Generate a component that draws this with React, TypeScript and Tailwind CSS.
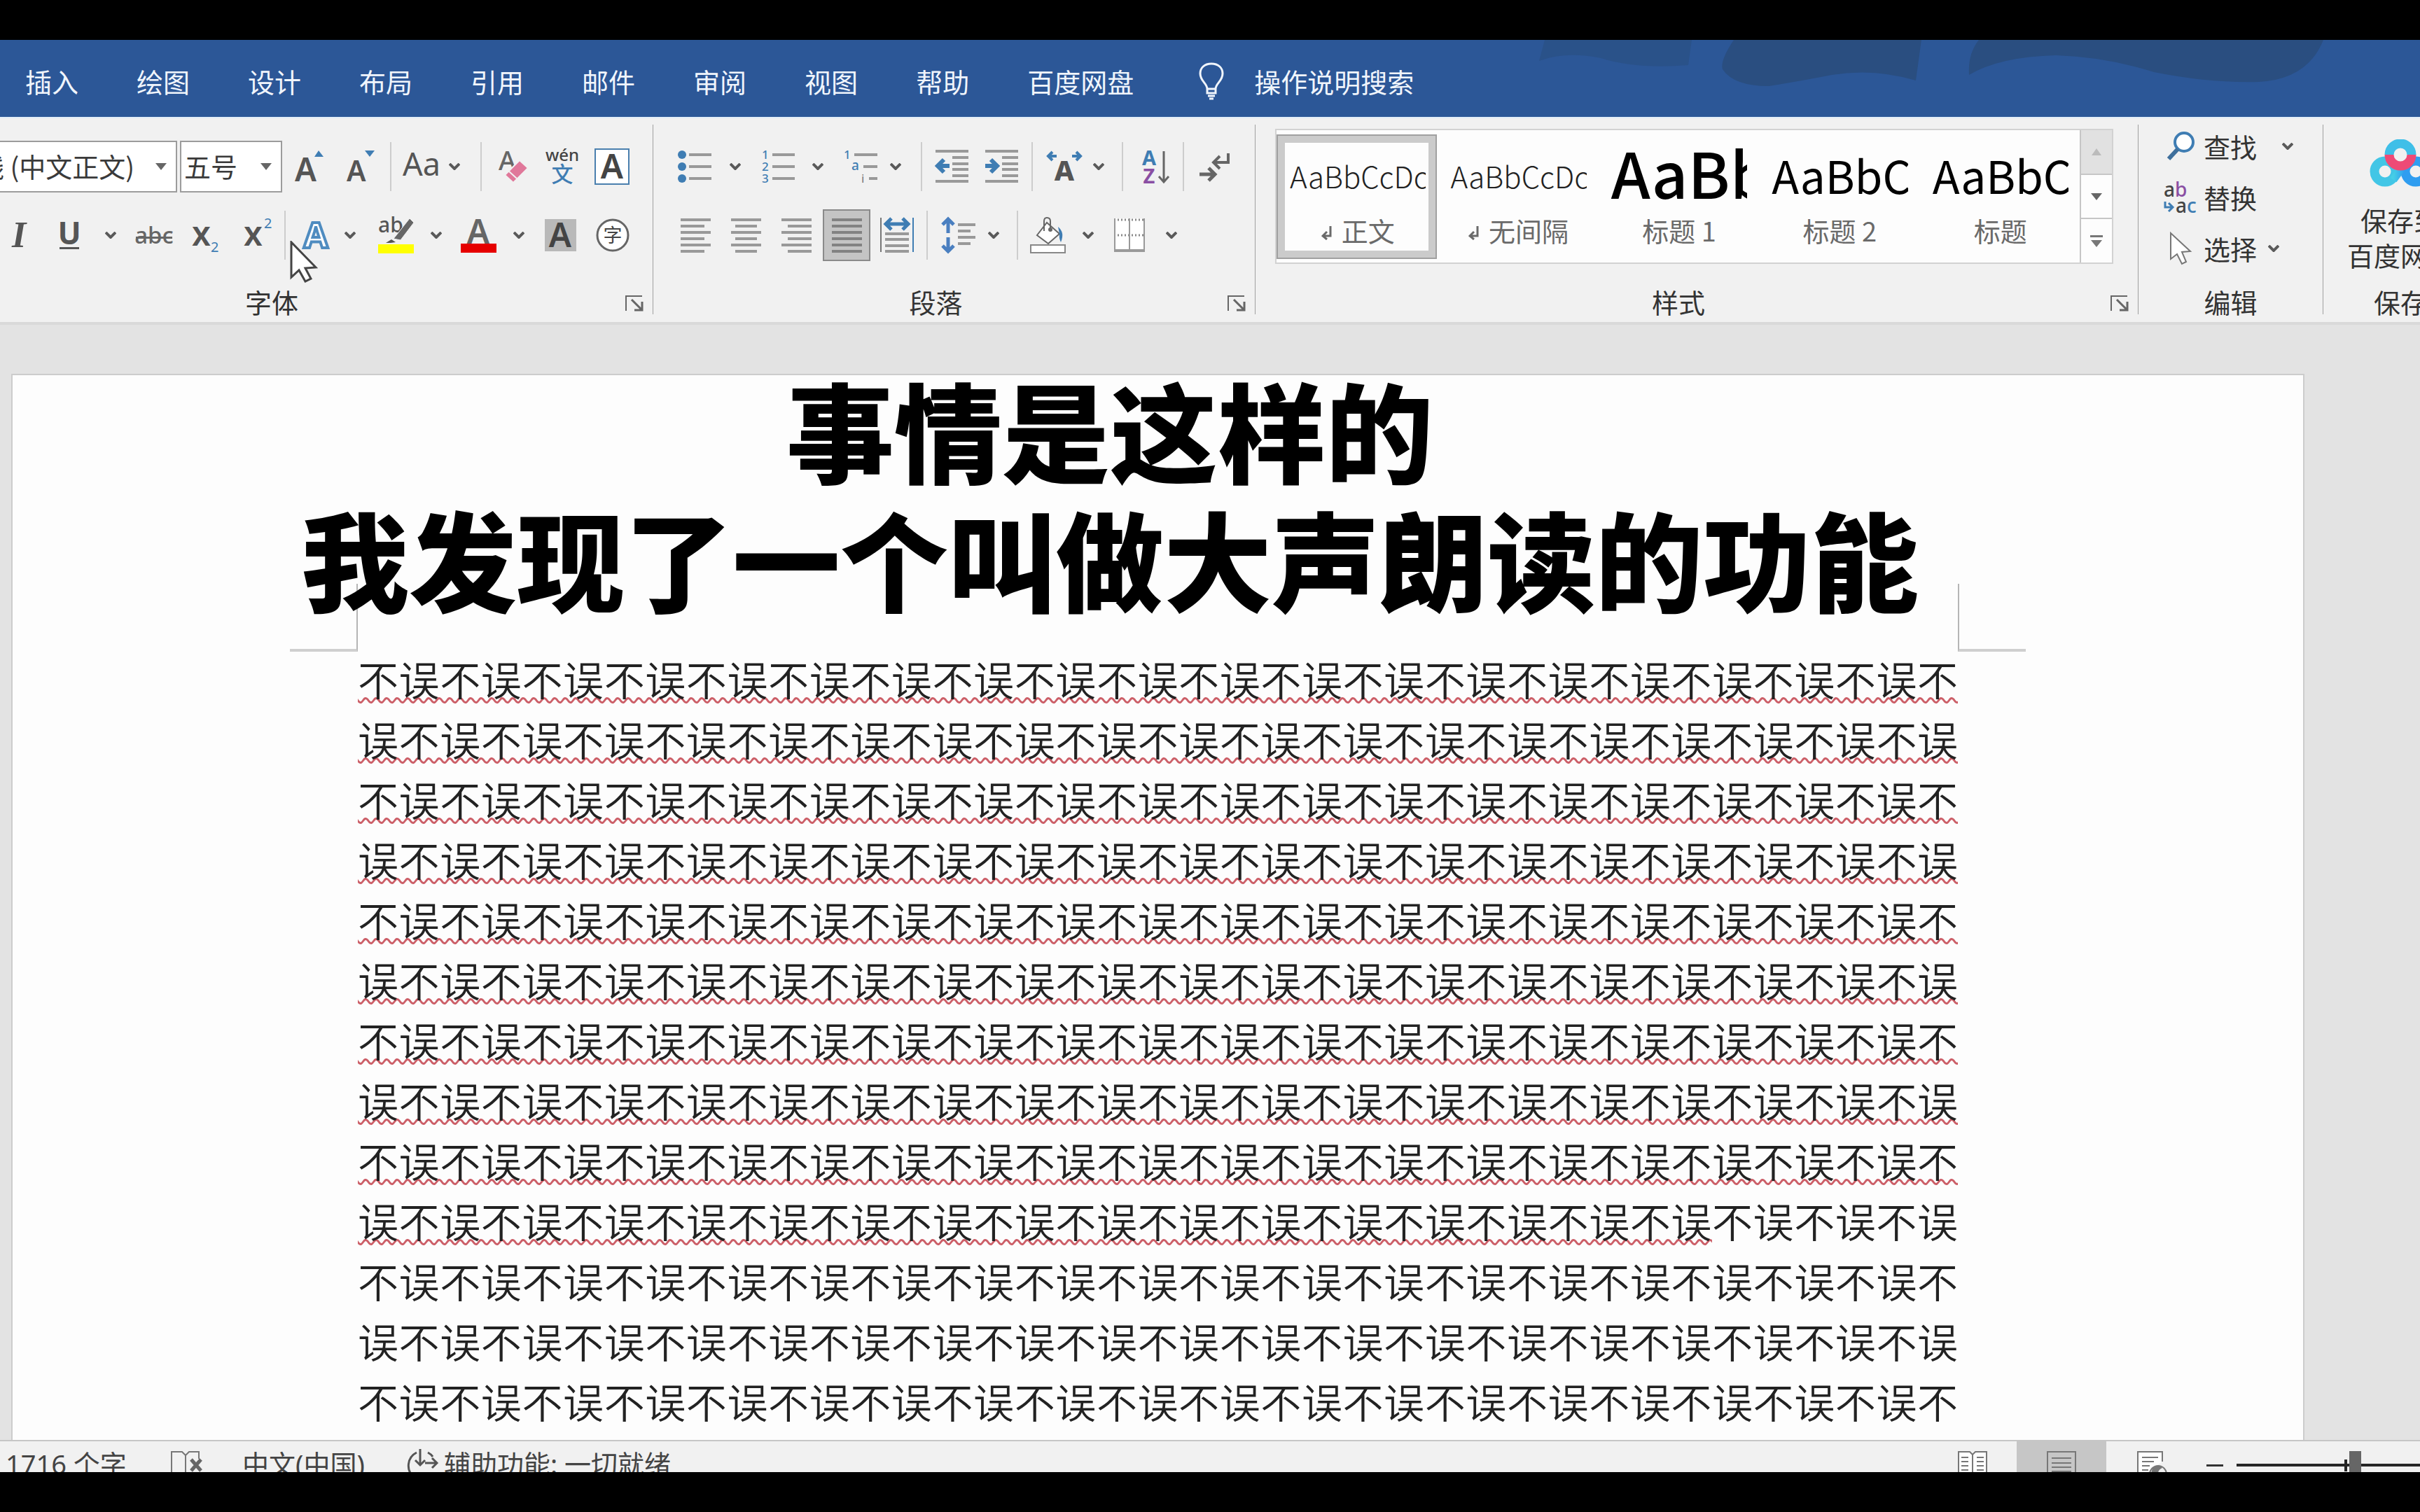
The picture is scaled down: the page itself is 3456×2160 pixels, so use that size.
import React from "react";

const TABS = ["插入", "绘图", "设计", "布局", "引用", "邮件", "审阅", "视图", "帮助", "百度网盘"];

const MARKED_PAIRS = 192;
const MARKED = "不误".repeat(MARKED_PAIRS);
const UNMARKED = "不误".repeat(61) + "不";

function Chevron() {
  return (
    <svg width="16" height="10" viewBox="0 0 16 10" fill="none" stroke="#5a5a5a" strokeWidth="4">
      <path d="M1 1 L8 8 L15 1" />
    </svg>
  );
}

function Rule({ className }: { className: string }) {
  return (
    <div className={`flex h-[70px] shrink-0 justify-center ${className}`}>
      <div className="h-full w-[2px] bg-[#cdcdcd]" />
    </div>
  );
}

function Tool({
  label,
  className,
  menu,
  children,
}: {
  label: string;
  className: string;
  menu?: string;
  children: React.ReactNode;
}) {
  return (
    <button type="button" aria-label={label} className={`flex h-[74px] shrink-0 items-center justify-center ${menu ?? ""} ${className}`}>
      {children}
      {menu && <Chevron />}
    </button>
  );
}

function Icon({ w, h = 52, children }: { w: number; h?: number; children: React.ReactNode }) {
  return (
    <svg width={w} height={h} viewBox={`0 0 ${w} ${h}`} fill="none" className="shrink-0 overflow-visible font-['Noto_Sans','Noto_Sans_CJK_SC',sans-serif]">
      {children}
    </svg>
  );
}

function Lines({ rows }: { rows: [number, number][] }) {
  return (
    <Icon w={43} h={48}>
      {rows.map(([x, w], i) => (
        <rect key={i} x={x} y={i * 9} width={w} height="4" fill="#999" />
      ))}
    </Icon>
  );
}

function GroupLabel({ text, launcher }: { text: string; launcher?: boolean }) {
  return (
    <div className="mt-auto mb-[10px] flex items-center">
      <div className="flex-1 text-center text-[38px] leading-[38px] text-[#333]">{text}</div>
      {launcher && (
        <button type="button" aria-label={`${text}设置`} className="flex w-[52px] justify-center pt-[4px]">
          <svg width="26" height="24" viewBox="0 0 26 24" fill="none" stroke="#666" strokeWidth="2">
            <path d="M1 23 V2 H24" />
            <path d="M9 7 L23 21 M24 10 V22 H13" strokeWidth="3" />
          </svg>
        </button>
      )}
    </div>
  );
}

function GroupRule() {
  return <div className="mt-[9px] mb-[11px] w-[1px] shrink-0 bg-[#a0a0a0]" />;
}

function ComboBox({ label, value, className }: { label: string; value: string; className: string }) {
  return (
    <div className={`flex h-[74px] shrink-0 items-center border-2 border-[#9c9c9c] bg-white ${className}`}>
      <input aria-label={label} defaultValue={value} className="h-full w-0 flex-1 bg-transparent pb-[4px] pl-[4px] text-[38px] text-[#3a3a3a] outline-none" />
      <button type="button" aria-label={`${label}列表`} className="flex h-full w-[42px] items-center justify-center">
        <svg width="16" height="10" viewBox="0 0 16 10" fill="#666">
          <path d="M0 0 H16 L8 10 Z" />
        </svg>
      </button>
    </div>
  );
}

function FontGroup() {
  return (
    <section aria-label="字体" className="-ml-[104px] flex w-[1036px] shrink-0 flex-col pt-[32px]">
      <div className="flex items-center pl-[24px]">
        <ComboBox label="字体名称" value="等线 (中文正文)" className="w-[333px] pl-[4px]" />
        <ComboBox label="字号" value="五号" className="ml-[4px] w-[146px]" />
        <Tool label="增大字号" className="ml-[2px] w-[73px]">
          <Icon w={42} h={46}>
            <text x="0" y="44" fontSize="46" fontWeight="600" fill="#555">A</text>
            <path d="M28 9 L34 0 L41 9 Z" fill="#3f7db3" />
          </Icon>
        </Tool>
        <Tool label="减小字号" className="w-[73px]">
          <Icon w={40} h={46}>
            <text x="0" y="44" fontSize="41" fontWeight="600" fill="#555">A</text>
            <path d="M26 0 L33 9 L40 0 Z" fill="#3f7db3" />
          </Icon>
        </Tool>
        <Rule className="w-[14px]" />
        <Tool label="更改大小写" className="w-[104px]" menu="gap-[14px]">
          <Icon w={50} h={46}>
            <text x="-2" y="36" fontSize="45" fill="#555">Aa</text>
          </Icon>
        </Tool>
        <Rule className="ml-[11px] w-[14px]" />
        <Tool label="清除所有格式" className="w-[79px]">
          <Icon w={42} h={50}>
            <text x="-1" y="30" fontSize="38" fontWeight="500" fill="#666">A</text>
            <path d="M29 16 L41 27 L20 48 L8 37 Z" fill="#e0789a" stroke="#f1f1f1" strokeWidth="2" />
            <path d="M13 31 L25 42" stroke="#f1f1f1" strokeWidth="2" />
          </Icon>
        </Tool>
        <Tool label="拼音指南" className="w-[59px]">
          <Icon w={44} h={52}>
            <text x="22" y="18" fontSize="24" fontWeight="500" textAnchor="middle" fill="#444">wén</text>
            <text x="22" y="48" fontSize="31" fontWeight="500" textAnchor="middle" fill="#3f7db3">文</text>
          </Icon>
        </Tool>
        <Tool label="字符边框" className="w-[84px]">
          <Icon w={50} h={52}>
            <rect x="1" y="1" width="48" height="50" fill="#fff" stroke="#4a7fae" strokeWidth="2" />
            <text x="25" y="43" fontSize="48" fontWeight="600" textAnchor="middle" fill="#444">A</text>
          </Icon>
        </Tool>
      </div>
      <div className="mt-[24px] flex items-center pl-[96px]">
        <Tool label="倾斜" className="w-[70px]">
          <span className="font-['Liberation_Serif',serif] text-[52px] leading-[52px] font-bold text-[#555] italic">I</span>
        </Tool>
        <Tool label="下划线" className="w-[126px]" menu="gap-[36px]">
          <Icon w={30} h={42}>
            <text x="15" y="34" fontSize="44" fontWeight="700" textAnchor="middle" fill="#555">U</text>
            <rect x="1" y="38" width="28" height="3" fill="#555" />
          </Icon>
        </Tool>
        <Tool label="删除线" className="w-[63px]">
          <Icon w={52} h={36}>
            <text x="26" y="30" fontSize="33" fontWeight="500" textAnchor="middle" fill="#666">abc</text>
            <rect x="0" y="20" width="52" height="3" fill="#666" />
          </Icon>
        </Tool>
        <Tool label="下标" className="w-[87px]">
          <Icon w={40} h={52}>
            <text x="-1" y="41" fontSize="48" fontWeight="600" fill="#555">x</text>
            <text x="26" y="50" fontSize="20" fill="#3f7db3">2</text>
          </Icon>
        </Tool>
        <Tool label="上标" className="w-[62px]">
          <Icon w={40} h={52}>
            <text x="-1" y="41" fontSize="48" fontWeight="600" fill="#555">x</text>
            <text x="28" y="16" fontSize="20" fill="#3f7db3">2</text>
          </Icon>
        </Tool>
        <Rule className="w-[14px]" />
        <Tool label="文本效果和版式" className="w-[111px]" menu="gap-[22px]">
          <Icon w={38} h={42}>
            <text x="19" y="39" fontSize="50" fontWeight="700" textAnchor="middle" fill="#fff" stroke="#4f8cc0" strokeWidth="4">
              A
            </text>
          </Icon>
        </Tool>
        <Tool label="文本突出显示颜色" className="w-[120px]" menu="gap-[24px]">
          <Icon w={51} h={52}>
            <text x="0" y="22" fontSize="30" fontWeight="500" fill="#555">ab</text>
            <path d="M45 2 L51 8 L32 33 L22 31 Z" fill="#666" stroke="#f1f1f1" strokeWidth="1" />
            <path d="M19 32 L25 36 L18 37 L11 37 Z" fill="#555" />
            <rect x="0" y="39" width="51" height="13" fill="#ffff00" />
          </Icon>
        </Tool>
        <Tool label="字体颜色" className="w-[116px]" menu="gap-[24px]">
          <Icon w={51} h={52}>
            <text x="25" y="38" fontSize="48" fontWeight="600" textAnchor="middle" fill="#666">A</text>
            <rect x="0" y="38" width="51" height="13" fill="#e60000" />
          </Icon>
        </Tool>
        <Tool label="字符底纹" className="w-[79px]">
          <Icon w={45} h={46}>
            <rect width="45" height="46" fill="#b9b9b9" />
            <text x="22" y="40" fontSize="48" fontWeight="600" textAnchor="middle" fill="#444">A</text>
          </Icon>
        </Tool>
        <Tool label="带圈字符" className="w-[69px]">
          <Icon w={48} h={50}>
            <circle cx="24" cy="25" r="22" fill="#fff" stroke="#666" strokeWidth="3" />
            <text x="24" y="35" fontSize="27" textAnchor="middle" fill="#444">字</text>
          </Icon>
        </Tool>
      </div>
      <GroupLabel text="字体" launcher />
    </section>
  );
}

function IndentIcon({ arrow }: { arrow: string }) {
  return (
    <Icon w={47} h={50}>
      <rect y="1" width="47" height="4" fill="#999" />
      <rect x="24" y="10" width="23" height="4" fill="#999" />
      <rect x="24" y="19" width="23" height="4" fill="#999" />
      <rect x="24" y="27" width="23" height="4" fill="#999" />
      <rect x="24" y="36" width="23" height="4" fill="#999" />
      <rect y="44" width="47" height="4" fill="#999" />
      <path d={arrow} stroke="#3f7db3" strokeWidth="6" />
    </Icon>
  );
}

function ParagraphGroup() {
  return (
    <section aria-label="段落" className="flex w-[859px] shrink-0 flex-col pt-[32px]">
      <div className="flex items-center pl-[20px]">
        <Tool label="项目符号" className="w-[120px]" menu="gap-[26px]">
          <Icon w={47} h={48}>
            {[7, 24, 41].map((y) => (
              <React.Fragment key={y}>
                <circle cx="5" cy={y} r="6" fill="#3f7db3" />
                <rect x="15" y={y - 2} width="32" height="4" fill="#999" />
              </React.Fragment>
            ))}
          </Icon>
        </Tool>
        <Tool label="编号" className="w-[117px]" menu="gap-[25px]">
          <Icon w={47} h={48}>
            {[7, 24, 41].map((y, i) => (
              <React.Fragment key={y}>
                <text x="0" y={y + 6} fontSize="17" fontWeight="500" fill="#3f7db3">{i + 1}</text>
                <rect x="15" y={y - 2} width="32" height="4" fill="#999" />
              </React.Fragment>
            ))}
          </Icon>
        </Tool>
        <Tool label="多级列表" className="w-[112px]" menu="gap-[18px]">
          <Icon w={47} h={48}>
            <text x="-1" y="13" fontSize="17" fontWeight="500" fill="#3f7db3">1</text>
            <text x="10" y="29" fontSize="19" fontWeight="500" fill="#3f7db3">a</text>
            <text x="24" y="47" fontSize="17" fill="#777">i</text>
            <rect x="14" y="5" width="33" height="4" fill="#999" />
            <rect x="27" y="22" width="20" height="4" fill="#999" />
            <rect x="35" y="39" width="12" height="4" fill="#999" />
          </Icon>
        </Tool>
        <Rule className="ml-[5px] w-[17px]" />
        <Tool label="减少缩进量" className="w-[71px]">
          <IndentIcon arrow="M20 24 H4 M12 15 L3 24 L12 33" />
        </Tool>
        <Tool label="增加缩进量" className="w-[71px]">
          <IndentIcon arrow="M0 24 H16 M8 15 L17 24 L8 33" />
        </Tool>
        <Rule className="w-[16px]" />
        <Tool label="中文版式" className="w-[108px]" menu="gap-[16px]">
          <Icon w={50} h={42}>
            <text x="25" y="41" fontSize="40" fontWeight="800" textAnchor="middle" fill="#555">A</text>
            <path d="M14 6 H2 M8 0 L2 6 L8 12 M36 6 H48 M42 0 L48 6 L42 12" stroke="#3f7db3" strokeWidth="4" />
          </Icon>
        </Tool>
        <Rule className="w-[26px]" />
        <Tool label="排序" className="w-[66px]">
          <Icon w={39} h={50}>
            <text x="11" y="23" fontSize="29" fontWeight="700" textAnchor="middle" fill="#3f7db3">A</text>
            <text x="11" y="49" fontSize="29" fontWeight="700" textAnchor="middle" fill="#8a4fa3">Z</text>
            <path d="M32 3 V46 M25 39 L32 47 L39 39" stroke="#666" strokeWidth="3" />
          </Icon>
        </Tool>
        <Rule className="w-[16px]" />
        <Tool label="显示编辑标记" className="w-[73px]">
          <Icon w={44} h={42}>
            <path d="M41 2 V15 H21 M29 6 L20 15 L29 24" stroke="#666" strokeWidth="4" />
            <path d="M0 32 H21 M13 23 L22 32 L13 41" stroke="#666" strokeWidth="5" />
          </Icon>
        </Tool>
      </div>
      <div className="mt-[24px] flex items-center pl-[24px]">
        <Tool label="左对齐" className="w-[72px]">
          <Lines rows={[[0, 43], [0, 34], [0, 43], [0, 34], [0, 43], [0, 34]]} />
        </Tool>
        <Tool label="居中" className="w-[72px]">
          <Lines rows={[[0, 43], [6, 31], [0, 43], [6, 31], [0, 43], [6, 31]]} />
        </Tool>
        <Tool label="右对齐" className="w-[72px]">
          <Lines rows={[[0, 43], [9, 34], [0, 43], [9, 34], [0, 43], [9, 34]]} />
        </Tool>
        <button type="button" aria-label="两端对齐" aria-pressed="true" className="mx-[2px] flex h-[74px] w-[68px] items-center justify-center border-2 border-[#8a8a8a] bg-[#c4c4c4]">
          <Icon w={43} h={48}>
            {[0, 9, 18, 27, 36, 45].map((y) => (
              <rect key={y} y={y} width="43" height="4" fill="#828282" />
            ))}
          </Icon>
        </button>
        <Tool label="分散对齐" className="w-[72px]">
          <Icon w={48} h={50}>
            <path d="M1 0 V49" stroke="#777" strokeWidth="2" />
            <path d="M47 0 V49" stroke="#3f7db3" strokeWidth="2" />
            {[21, 29, 38, 46].map((y) => (
              <rect key={y} x="7" y={y} width="34" height="4" fill="#999" />
            ))}
            <path d="M8 9 H40 M16 1 L8 9 L16 17 M32 1 L40 9 L32 17" stroke="#3f7db3" strokeWidth="5" />
          </Icon>
        </Tool>
        <Rule className="w-[14px]" />
        <Tool label="行和段落间距" className="w-[109px]" menu="gap-[18px]">
          <Icon w={48} h={50}>
            <path d="M9 3 V22 M1 10 L9 2 L17 10 M9 28 V47 M1 40 L9 48 L17 40" stroke="#4a7fc0" strokeWidth="5" />
            <rect x="23" y="8" width="25" height="4" fill="#999" />
            <rect x="23" y="17" width="18" height="4" fill="#999" />
            <rect x="23" y="26" width="25" height="4" fill="#999" />
            <rect x="23" y="35" width="18" height="4" fill="#999" />
          </Icon>
        </Tool>
        <Rule className="w-[26px]" />
        <Tool label="底纹" className="w-[100px]" menu="gap-[24px]">
          <Icon w={51} h={52}>
            <path d="M24 8 L42 24 L26 38 L10 26 Z" fill="#fff" stroke="#666" strokeWidth="2" />
            <path d="M20 20 V6 Q20 1 24 1 Q29 1 29 6 V16" stroke="#666" strokeWidth="2" />
            <circle cx="29" cy="18" r="3" fill="#666" />
            <path d="M40 14 Q50 22 44 36 Q41 30 42 24 Z" fill="#3f7db3" />
            <rect x="1" y="40" width="49" height="11" fill="#fff" stroke="#888" strokeWidth="2" />
          </Icon>
        </Tool>
        <Tool label="边框" className="ml-[10px] w-[119px]" menu="gap-[30px]">
          <Icon w={44} h={48}>
            <rect width="44" height="48" fill="#fff" />
            <path d="M0 2 H44 M0 24 H44" stroke="#888" strokeWidth="3" strokeDasharray="2 3" />
            <path d="M1 0 V48 M22 0 V48 M43 0 V48" stroke="#999" strokeWidth="2" />
            <rect y="44" width="44" height="4" fill="#999" />
          </Icon>
        </Tool>
      </div>
      <GroupLabel text="段落" launcher />
    </section>
  );
}

const STYLES = [
  { name: "正文", mark: true, sample: "AaBbCcDc", cls: "text-[42px] leading-[118px] font-light text-[#222]" },
  { name: "无间隔", mark: true, sample: "AaBbCcDc", cls: "text-[42px] leading-[118px] font-light text-[#222]" },
  { name: "标题 1", mark: false, sample: "AaBb", cls: "text-[90px] leading-[106px] font-medium text-black" },
  { name: "标题 2", mark: false, sample: "AaBbC", cls: "text-[64px] leading-[114px] font-normal text-black" },
  { name: "标题", mark: false, sample: "AaBbC", cls: "text-[64px] leading-[114px] font-normal text-black" },
];

function StylesGroup() {
  return (
    <section aria-label="样式" className="flex min-w-0 flex-1 flex-col pt-[15px]">
      <div className="mr-[35px] ml-[28px] flex h-[193px] border-2 border-[#d2d2d2] bg-[#fdfdfd]">
        <div className="flex min-w-0 flex-1 items-center">
          {STYLES.map((s, i) => (
            <button
              key={s.name}
              type="button"
              className={
                i === 0
                  ? "flex h-[178px] w-0 flex-1 flex-col pr-[16px] pl-[19px] outline-2 -outline-offset-2 outline-[#a0a0a0] inset-ring-[12px] inset-ring-[#cbcbcb]"
                  : "flex h-[178px] w-0 flex-1 flex-col pr-[16px] pl-[19px]"
              }
            >
              <div className={`h-[110px] w-full overflow-hidden text-left whitespace-nowrap ${s.cls}`}>{s.sample}</div>
              <div className="flex w-full items-center justify-center gap-[14px] text-[38px] leading-[54px] whitespace-nowrap text-[#6a6a6a]">
                {s.mark && (
                  <svg width="15" height="20" viewBox="0 0 15 20" fill="none" stroke="#6a6a6a" strokeWidth="3" className="mt-[8px]">
                    <path d="M13 0 V14 H2 M8 8 L2 14 L8 19" />
                  </svg>
                )}
                {s.name}
              </div>
            </button>
          ))}
        </div>
        <div className="flex w-[46px] flex-col border-l-2 border-[#c6c6c6]">
          <button type="button" aria-label="上一行" className="flex flex-1 items-center justify-center bg-[#e1e1e1]">
            <svg width="14" height="10" viewBox="0 0 14 10" fill="#bbb"><path d="M0 10 H14 L7 0 Z" /></svg>
          </button>
          <button type="button" aria-label="下一行" className="flex flex-1 items-center justify-center border-y-2 border-[#c6c6c6]">
            <svg width="16" height="10" viewBox="0 0 16 10" fill="#666"><path d="M0 0 H16 L8 10 Z" /></svg>
          </button>
          <button type="button" aria-label="其他样式" className="flex flex-1 items-center justify-center">
            <svg width="18" height="17" viewBox="0 0 18 17" fill="#777"><path d="M0 0 H18 V3 H0 Z M1 7 H17 L9 17 Z" /></svg>
          </button>
        </div>
      </div>
      <GroupLabel text="样式" launcher />
    </section>
  );
}

function EditGroup() {
  const row = "flex h-[73px] items-center pl-[36px] text-[38px] leading-[38px] text-[#333]";
  return (
    <section aria-label="编辑" className="flex w-[263px] shrink-0 flex-col pt-[3px]">
      <button type="button" className={row}>
        <span className="mr-[9px] flex w-[48px] justify-center">
          <Icon w={40} h={42}>
            <circle cx="25" cy="15" r="13" fill="#fff" stroke="#3f7db3" strokeWidth="4" />
            <path d="M16 25 L3 39" stroke="#3f6f9c" strokeWidth="6" />
          </Icon>
        </span>
        <span className="mr-[36px]">查找</span>
        <Chevron />
      </button>
      <button type="button" className={row}>
        <span className="mr-[9px] flex w-[48px] justify-center">
          <Icon w={48} h={46}>
            <text x="0" y="22" fontSize="28" fontWeight="500" fill="#444">a<tspan fill="#8a4fa3">b</tspan></text>
            <text x="17" y="45" fontSize="28" fontWeight="500" fill="#444">a<tspan fill="#3f7db3">c</tspan></text>
            <path d="M2 29 V37 H12 M7 31 L13 37 L7 43" stroke="#3f7db3" strokeWidth="3" />
          </Icon>
        </span>
        替换
      </button>
      <button type="button" className={row}>
        <span className="mr-[9px] flex w-[48px] justify-center">
          <Icon w={30} h={46}>
            <path d="M1 1 V38 L10 31 L17 45 L23 42 L17 28 L29 27 Z" fill="#fff" stroke="#777" strokeWidth="2" />
          </Icon>
        </span>
        <span className="mr-[16px]">选择</span>
        <Chevron />
      </button>
      <GroupLabel text="编辑" />
    </section>
  );
}

function SaveGroup() {
  return (
    <section aria-label="保存" className="-mr-[82px] flex w-[220px] shrink-0 flex-col pt-[30px]">
      <button type="button" className="flex flex-col items-center text-[38px] leading-[50px] text-[#333]">
        <svg width="88" height="68" viewBox="0 0 88 68" fill="none" strokeWidth="13" className="mb-[22px]">
          <defs>
            <linearGradient id="cloudBlue" x1="0" y1="0" x2="1" y2="0">
              <stop offset="0" stopColor="#45cfe6" />
              <stop offset="1" stopColor="#2f9df0" />
            </linearGradient>
          </defs>
          <circle cx="22" cy="46" r="15" stroke="#42c6e6" />
          <circle cx="66" cy="46" r="15" stroke="#2f9df0" />
          <path d="M34 58 L50 36" stroke="url(#cloudBlue)" strokeWidth="11" />
          <path d="M28 22 A16 16 0 0 1 60 22" stroke="#3fbfe8" />
          <path d="M28 22 A16 16 0 0 0 60 22" stroke="#ee4a76" />
        </svg>
        <span>保存到</span>
        <span>百度网盘</span>
      </button>
      <GroupLabel text="保存" />
    </section>
  );
}

function TitleArt() {
  return (
    <svg aria-hidden="true" width="1180" height="80" viewBox="0 0 1180 80" className="absolute top-0 right-[100px]" fill="#2a4e80">
      <path opacity="0.6" d="M30 0 L22 30 Q60 16 110 26 Q160 42 235 36 L240 0 Z" />
      <path d="M300 0 Q280 30 284 42 Q300 66 350 66 Q400 58 440 50 Q500 40 560 58 L568 0 Z" />
      <path d="M650 0 Q634 20 636 50 Q680 24 760 22 Q830 24 900 46 Q980 62 1050 60 Q1120 56 1142 0 Z" />
    </svg>
  );
}

function StatusBar() {
  return (
    <footer className="h-[46px] shrink-0 overflow-hidden border-t-2 border-[#c6c6c6] bg-[#f1f1f1] text-[38px] leading-[38px] text-[#444]">
      <div className="flex h-[68px] items-center pl-[8px] font-['Noto_Sans','Noto_Sans_CJK_SC',sans-serif]">
        <span className="w-[236px] pb-[4px]">1716 个字</span>
        <button type="button" aria-label="校对" className="w-[102px]">
          <Icon w={46} h={42}>
            <path d="M1 41 V2 H16 L21 7 L26 2 H40 V12 M21 7 V41" stroke="#777" strokeWidth="2" />
            <path d="M29 13 L43 29 M43 13 L29 29" stroke="#666" strokeWidth="5" />
          </Icon>
        </button>
        <span className="w-[236px] pb-[4px]">中文(中国)</span>
        <Icon w={46} h={46}>
          <path d="M13 5 A21 21 0 0 0 9 40 M26 42 A21 21 0 0 0 39 36 M29 5 A20 20 0 0 1 36 11" stroke="#555" strokeWidth="3" />
          <path d="M18 0 V23 M11 16 L18 23 L25 16 M25 20 H42 M35 13 L42 20 L35 27" stroke="#555" strokeWidth="3" />
        </Icon>
        <span className="ml-[6px] pb-[4px]">辅助功能: 一切就绪</span>
        <div className="ml-auto flex h-full items-center">
          <button type="button" aria-label="阅读视图" className="flex h-full w-[126px] items-center justify-center">
            <Icon w={42} h={42}>
              <path d="M1 41 V2 H17 L21 6 L25 2 H41 V41" fill="#fff" stroke="#777" strokeWidth="2" />
              <path d="M21 6 V41 M5 10 H15 M5 16 H15 M5 22 H15 M5 28 H15 M27 10 H37 M27 16 H37 M27 22 H37 M27 28 H37" stroke="#777" strokeWidth="2" />
            </Icon>
          </button>
          <button type="button" aria-label="页面视图" aria-pressed="true" className="flex h-full w-[128px] items-center justify-center bg-[#c6c6c6]">
            <Icon w={42} h={42}>
              <path d="M1 41 V2 H41 V41 M7 11 H35 M7 18 H35 M7 24 H35 M7 30 H35" stroke="#777" strokeWidth="2" />
            </Icon>
          </button>
          <button type="button" aria-label="网页视图" className="flex h-full w-[130px] items-center justify-center">
            <Icon w={42} h={42}>
              <path d="M1 41 V2 H36 V16" fill="#fff" stroke="#777" strokeWidth="2" />
              <path d="M7 10 H30 M7 16 H24 M7 22 H18 M7 28 H16" stroke="#777" strokeWidth="2" />
              <circle cx="30" cy="34" r="12" fill="#f1f1f1" stroke="#777" strokeWidth="2" />
              <path d="M22 25 Q32 19 36 25 Q28 29 31 35 Q24 39 20 33 Z" fill="#777" />
            </Icon>
          </button>
          <button type="button" aria-label="缩小" className="ml-[13px] h-[3px] w-[24px] bg-[#333]" />
          <div className="relative -mr-[58px] ml-[19px] flex h-[40px] w-[320px] items-center">
            <input
              type="range"
              aria-label="缩放"
              defaultValue={53}
              className="h-[4px] w-full appearance-none bg-[#262626] [&::-webkit-slider-thumb]:h-[40px] [&::-webkit-slider-thumb]:w-[17px] [&::-webkit-slider-thumb]:appearance-none [&::-webkit-slider-thumb]:bg-[#666]"
            />
            <span className="absolute top-[12px] left-[154px] h-[17px] w-[4px] bg-[#262626]" />
          </div>
        </div>
      </div>
    </footer>
  );
}

export default function App() {
  return (
    <div className="flex h-screen flex-col overflow-hidden bg-black py-[57px] font-['Noto_Sans_CJK_SC',sans-serif]">
      <div className="relative flex min-h-0 flex-1 flex-col overflow-hidden bg-[#e3e3e3]">
        <header className="relative h-[110px] shrink-0 bg-[#2c5797]">
          <TitleArt />
          <nav className="relative flex h-full items-center pt-[8px] pl-[36px] text-[38px] leading-[38px] text-[#f0f5fc]">
            <div className="flex gap-[83px]">
              {TABS.map((t) => (
                <a key={t} href="#" className="whitespace-nowrap">{t}</a>
              ))}
            </div>
            <a href="#" className="ml-[93px] flex items-center gap-[43px] whitespace-nowrap">
              <svg width="36" height="54" viewBox="0 0 36 54" fill="none" stroke="#f0f5fc" strokeWidth="3">
                <path d="M12 38 C12 30 2 27 2 16 C2 8 8 2 18 2 C28 2 34 8 34 16 C34 27 24 30 24 38 V44 H12 Z M12 38 H24 M13 48 H23 M15 52 H21" />
              </svg>
              操作说明搜索
            </a>
          </nav>
        </header>

        <div className="flex h-[297px] shrink-0 border-t-2 border-b-4 border-t-[#e3eef8] border-b-[#d9d9d9] bg-[#f1f1f1]">
          <FontGroup />
          <GroupRule />
          <ParagraphGroup />
          <GroupRule />
          <StylesGroup />
          <GroupRule />
          <EditGroup />
          <GroupRule />
          <SaveGroup />
        </div>

        <main className="flex min-h-0 flex-1 pt-[70px] pr-[165px] pl-[16px]">
          <article className="relative flex-1 border-2 border-b-0 border-[#cccccc] bg-[#fdfdfd] px-[493px] pt-[298px]">
            <div className="-mx-[97px] flex justify-between">
              <div className="h-[97px] w-[97px] border-r-2 border-b-4 border-r-[#b5b5b5] border-b-[#cfcfcf]" />
              <div className="h-[97px] w-[97px] border-b-4 border-l-2 border-b-[#cfcfcf] border-l-[#b5b5b5]" />
            </div>
            <p className="-mt-[5px] text-justify text-[58px] leading-[86px] font-[350] text-[#222] [line-break:anywhere] [text-align-last:justify]">
              <span className="underline decoration-[#cc5f68] decoration-wavy decoration-[3px] underline-offset-[2px] [text-decoration-skip-ink:none]">{MARKED}</span>
              {UNMARKED}
            </p>
            <h1 className="absolute -top-[16px] right-[137px] left-0 text-center text-[154px] leading-[184px] font-black text-black">
              事情是这样的
              <br />
              我发现了一个叫做大声朗读的功能
            </h1>
          </article>
        </main>

        <StatusBar />

        <svg aria-hidden="true" width="40" height="60" viewBox="0 0 40 60" className="absolute top-[287px] left-[414px]">
          <path d="M2 2 V52 L13 42 L22 58 L30 54 L22 39 L37 38 Z" fill="#fff" stroke="#444" strokeWidth="3" />
        </svg>
      </div>
    </div>
  );
}
